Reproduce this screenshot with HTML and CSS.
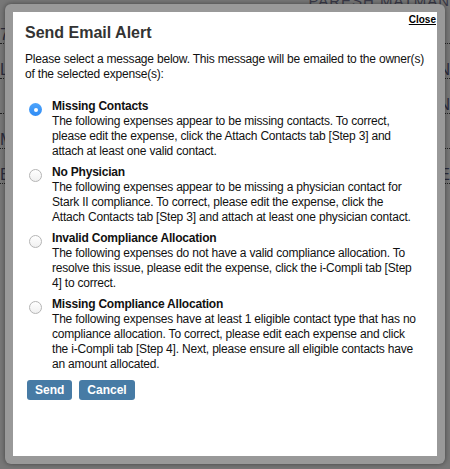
FILE: index.html
```html
<!DOCTYPE html>
<html lang="en">
<head>
    <meta charset="UTF-8">
    <meta name="viewport" content="width=device-width, initial-scale=1.0">
    <title>Send Email Alert</title>
    <link rel="stylesheet" href="styles.css">
</head>
<body>
    <!-- page behind the modal, mostly hidden -->
    <div class="page">
        <div class="page-user">PARESH MATMAN</div>
        <div class="page-row"><span class="page-link">7A</span><span class="page-link"></span></div>
        <div class="page-row"><span class="page-link">L</span><span class="page-link">N</span></div>
        <div class="page-row"><span class="page-link"></span><span class="page-link">N</span></div>
        <div class="page-row"><span class="page-link">M</span><span class="page-link"></span></div>
        <div class="page-row"><span class="page-link">E</span><span class="page-link">E</span></div>
    </div>

    <div class="modal">
        <div class="modal-body">
            <a href="#" class="close-link">Close</a>
            <h2>Send Email Alert</h2>
            <p class="intro">Please select a message below. This message will be emailed to the owner(s) of the selected expense(s):</p>

            <div class="options">
                <label class="option">
                    <span class="radio checked"></span>
                    <span class="option-text">
                        <span class="option-title">Missing Contacts</span>
                        The following expenses appear to be missing contacts. To correct, please edit the expense, click the Attach Contacts tab [Step 3] and attach at least one valid contact.
                    </span>
                </label>
                <label class="option">
                    <span class="radio"></span>
                    <span class="option-text">
                        <span class="option-title">No Physician</span>
                        The following expenses appear to be missing a physician contact for Stark II compliance. To correct, please edit the expense, click the Attach&nbsp;Contacts tab [Step 3] and attach at least one physician contact.
                    </span>
                </label>
                <label class="option">
                    <span class="radio"></span>
                    <span class="option-text">
                        <span class="option-title">Invalid Compliance Allocation</span>
                        The following expenses do not have a valid compliance allocation. To resolve this issue, please edit the expense, click the i-Compli tab [Step 4] to correct.
                    </span>
                </label>
                <label class="option">
                    <span class="radio"></span>
                    <span class="option-text">
                        <span class="option-title">Missing Compliance Allocation</span>
                        The following expenses have at least 1 eligible contact type that has no compliance allocation. To correct, please edit each expense and click the i-Compli tab [Step 4]. Next, please ensure all eligible contacts have an amount allocated.
                    </span>
                </label>
            </div>

            <div class="actions">
                <button type="button" class="btn">Send</button>
                <button type="button" class="btn">Cancel</button>
            </div>
        </div>
    </div>
</body>
</html>
```

FILE: styles.css
```css
body {
    margin: 0;
    background-color: #777777;
    font-family: 'Liberation Sans', Arial, sans-serif;
    height: 469px;
    overflow: hidden;
    position: relative;
}
.page {
    color: #2c2c3c;
    font-size: 16px;
}
.page-user {
    text-align: right;
    margin-top: -8px;
    font-size: 15px;
    letter-spacing: 1px;
    color: #3a3a48;
}
.page-row {
    display: flex;
    justify-content: space-between;
    margin-top: 17px;
    height: 18px;
}
.page-link {
    display: inline-block;
    min-width: 10px;
    border-bottom: 1px dotted #222;
    line-height: 17px;
}
.modal {
    position: absolute;
    top: 4px;
    left: 5px;
    width: 440px;
    height: 460px;
    box-sizing: border-box;
    padding: 8px;
    background-color: #999999;
    border-radius: 6px;
    box-shadow: 0 0 5px rgba(0, 0, 0, 0.45);
}
.modal-body {
    position: relative;
    background-color: #ffffff;
    height: 100%;
    box-sizing: border-box;
    padding: 11px 12px 12px 12px;
    color: #111;
}
.close-link {
    position: absolute;
    top: 2px;
    right: 1px;
    font-size: 10px;
    font-weight: bold;
    color: #000;
    text-decoration: underline;
}
h2 {
    margin: 0;
    font-size: 16px;
    line-height: 20px;
    color: #333;
}
.intro {
    margin: 9px 0 0 0;
    font-size: 12px;
    line-height: 15px;
    letter-spacing: -0.2px;
}
.options {
    display: flex;
    flex-direction: column;
    gap: 6px;
    margin-top: 17px;
}
.option {
    display: flex;
    align-items: flex-start;
    font-size: 12px;
    line-height: 15px;
    letter-spacing: -0.2px;
}
.option-title {
    display: block;
    font-weight: bold;
}
.option-text {
    flex: 1;
    padding-right: 5px;
}
.radio {
    flex: none;
    width: 13px;
    height: 13px;
    box-sizing: border-box;
    margin: 4px 10px 0 4px;
    border-radius: 50%;
    border: 1px solid #b5b5b5;
    background: linear-gradient(#ffffff, #f0f0f0);
    position: relative;
}
.radio.checked {
    border: none;
    background: linear-gradient(#4ea4fb, #2f8cf5);
}
.radio.checked::after {
    content: '';
    position: absolute;
    top: 4.5px;
    left: 4.5px;
    width: 4px;
    height: 4px;
    border-radius: 50%;
    background: #fff;
}
.actions {
    display: flex;
    gap: 7px;
    margin: 8px 0 0 2px;
}
.btn {
    height: 20px;
    padding: 0 8px;
    border: none;
    border-radius: 3px;
    background-color: #477ba5;
    color: #fff;
    font-family: 'Liberation Sans', Arial, sans-serif;
    font-size: 12px;
    font-weight: bold;
    cursor: pointer;
}
```
